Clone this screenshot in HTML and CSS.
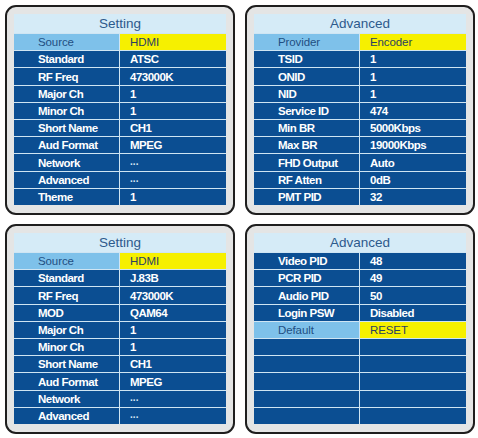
FILE: index.html
```html
<!DOCTYPE html>
<html>
<head>
<meta charset="utf-8">
<link rel="stylesheet" href="styles.css">
</head>
<body>
<div class="grid">
  <div class="panel">
    <div class="menu">
      <div class="title">Setting</div>
      <div class="row sel"><span class="k">Source</span><span class="v">HDMI</span></div>
      <div class="row"><span class="k">Standard</span><span class="v">ATSC</span></div>
      <div class="row"><span class="k">RF Freq</span><span class="v">473000K</span></div>
      <div class="row"><span class="k">Major Ch</span><span class="v">1</span></div>
      <div class="row"><span class="k">Minor Ch</span><span class="v">1</span></div>
      <div class="row"><span class="k">Short Name</span><span class="v">CH1</span></div>
      <div class="row"><span class="k">Aud Format</span><span class="v">MPEG</span></div>
      <div class="row"><span class="k">Network</span><span class="v dots">···</span></div>
      <div class="row"><span class="k">Advanced</span><span class="v dots">···</span></div>
      <div class="row"><span class="k">Theme</span><span class="v">1</span></div>
    </div>
  </div>
  <div class="panel">
    <div class="menu">
      <div class="title">Advanced</div>
      <div class="row sel"><span class="k">Provider</span><span class="v">Encoder</span></div>
      <div class="row"><span class="k">TSID</span><span class="v">1</span></div>
      <div class="row"><span class="k">ONID</span><span class="v">1</span></div>
      <div class="row"><span class="k">NID</span><span class="v">1</span></div>
      <div class="row"><span class="k">Service ID</span><span class="v">474</span></div>
      <div class="row"><span class="k">Min BR</span><span class="v">5000Kbps</span></div>
      <div class="row"><span class="k">Max BR</span><span class="v">19000Kbps</span></div>
      <div class="row"><span class="k">FHD Output</span><span class="v">Auto</span></div>
      <div class="row"><span class="k">RF Atten</span><span class="v">0dB</span></div>
      <div class="row"><span class="k">PMT PID</span><span class="v">32</span></div>
    </div>
  </div>
  <div class="panel">
    <div class="menu">
      <div class="title">Setting</div>
      <div class="row sel"><span class="k">Source</span><span class="v">HDMI</span></div>
      <div class="row"><span class="k">Standard</span><span class="v">J.83B</span></div>
      <div class="row"><span class="k">RF Freq</span><span class="v">473000K</span></div>
      <div class="row"><span class="k">MOD</span><span class="v">QAM64</span></div>
      <div class="row"><span class="k">Major Ch</span><span class="v">1</span></div>
      <div class="row"><span class="k">Minor Ch</span><span class="v">1</span></div>
      <div class="row"><span class="k">Short Name</span><span class="v">CH1</span></div>
      <div class="row"><span class="k">Aud Format</span><span class="v">MPEG</span></div>
      <div class="row"><span class="k">Network</span><span class="v dots">···</span></div>
      <div class="row"><span class="k">Advanced</span><span class="v dots">···</span></div>
    </div>
  </div>
  <div class="panel">
    <div class="menu">
      <div class="title">Advanced</div>
      <div class="row"><span class="k">Video PID</span><span class="v">48</span></div>
      <div class="row"><span class="k">PCR PID</span><span class="v">49</span></div>
      <div class="row"><span class="k">Audio PID</span><span class="v">50</span></div>
      <div class="row"><span class="k">Login PSW</span><span class="v">Disabled</span></div>
      <div class="row sel"><span class="k">Default</span><span class="v">RESET</span></div>
      <div class="row"><span class="k"></span><span class="v"></span></div>
      <div class="row"><span class="k"></span><span class="v"></span></div>
      <div class="row"><span class="k"></span><span class="v"></span></div>
      <div class="row"><span class="k"></span><span class="v"></span></div>
      <div class="row"><span class="k"></span><span class="v"></span></div>
    </div>
  </div>
</div>
</body>
</html>
```
FILE: styles.css
```css
html, body {
  margin: 0;
  padding: 0;
  background: #ffffff;
}
body {
  font-family: "Liberation Sans", Arial, sans-serif;
}
.grid {
  display: grid;
  grid-template-columns: 230px 230px;
  grid-template-rows: 210px 210px;
  column-gap: 10px;
  row-gap: 9px;
  padding: 5px 0 0 5px;
}
.panel {
  box-sizing: border-box;
  border: 2px solid #1e1e1e;
  border-radius: 11px;
  background: #e4e5e5;
  padding: 7px 7px 8px 7px;
}
.menu {
  display: flex;
  flex-direction: column;
  height: 191px;
}
.title {
  box-sizing: border-box;
  height: 19px;
  background: #d5ebf7;
  color: #2d5a8c;
  font-size: 13.5px;
  line-height: 19px;
  text-align: center;
}
.row {
  box-sizing: border-box;
  flex: 1 1 0;
  display: flex;
  border-top: 1px solid #cfe5f3;
  background: #0b4e92;
  color: #ffffff;
  font-size: 11.5px;
  font-weight: bold;
  letter-spacing: -0.5px;
  align-items: stretch;
}
.k, .v {
  display: flex;
  align-items: center;
  width: 50%;
  box-sizing: border-box;
}
.k {
  padding-left: 24px;
  border-right: 1px solid #cfe5f3;
}
.v {
  padding-left: 10px;
}
.dots {
  font-size: 10px;
  letter-spacing: -0.5px;
  padding-top: 3px;
  color: #d9e6f2;
}
.sel {
  background: #7ec1ea;
  font-weight: normal;
  letter-spacing: -0.1px;
}
.sel .k {
  color: #1f4f82;
}
.sel .v {
  background: #f6f000;
  color: #2a3f60;
}
```
